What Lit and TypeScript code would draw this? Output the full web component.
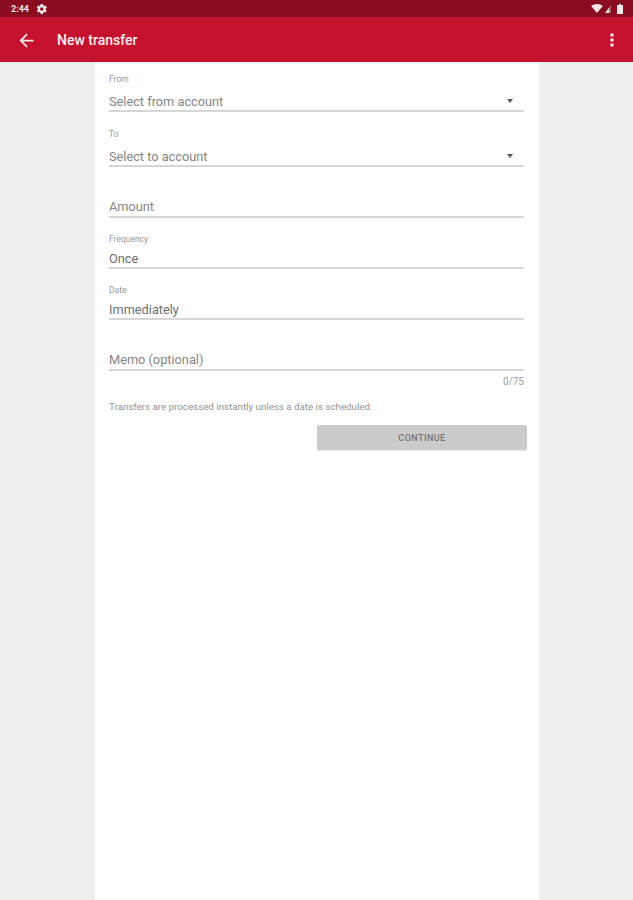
import { LitElement, html, css, nothing } from 'lit';
import { customElement } from 'lit/decorators.js';

interface Field {
  label?: string;
  value: string;
  select?: boolean;
  cls: string;
}

const FIELDS: Field[] = [
  { label: 'From', value: 'Select from account', select: true, cls: 'from' },
  { label: 'To', value: 'Select to account', select: true, cls: 'to' },
  { value: 'Amount', cls: 'amount' },
  { label: 'Frequency', value: 'Once', cls: 'freq' },
  { label: 'Date', value: 'Immediately', cls: 'date' },
  { value: 'Memo (optional)', cls: 'memo' },
];

@customElement('app-root')
export class AppRoot extends LitElement {
  static styles = css`
    :host {
      display: flex;
      flex-direction: column;
      height: 900px;
      background: #eeeeee;
      font-family: Roboto, 'Liberation Sans', sans-serif;
      overflow: hidden;
    }

    .status {
      height: 17px;
      flex: none;
      background: #8a0c21;
      color: #f6e6e8;
      display: flex;
      align-items: center;
      padding: 0 10px 0 11px;
      font-size: 9px;
      font-weight: 700;
    }

    .status svg {
      display: block;
    }

    .status__time {
      margin-right: 7px;
    }

    .status__right {
      margin-left: auto;
      display: flex;
      align-items: center;
      gap: 2px;
    }

    .status__battery {
      margin-left: 4px;
    }

    .toolbar {
      height: 45px;
      flex: none;
      background: #c5102e;
      border-bottom: 1px solid #cc0f24;
      box-sizing: border-box;
      display: flex;
      align-items: center;
      color: #fbeef0;
      padding: 2px 19px 0 16px;
    }

    .toolbar__title {
      margin-left: 20px;
      font-size: 14px;
      font-weight: 500;
    }

    .toolbar__more {
      margin-left: auto;
    }

    .toolbar svg {
      display: block;
    }

    .panel {
      flex: 1;
      width: 444px;
      margin-left: 95px;
      background: #ffffff;
      box-sizing: border-box;
      padding: 11px 15px 0 14px;
    }

    .field {
      position: relative;
      display: flex;
      flex-direction: column;
      justify-content: flex-end;
      border-bottom: 2px solid #d6d6d6;
      box-sizing: border-box;
    }

    .from { height: 39px; }
    .to { height: 39px; margin-top: 16px; }
    .amount { height: 28px; margin-top: 23px; }
    .freq { height: 39px; margin-top: 12px; }
    .date { height: 39px; margin-top: 12px; }
    .memo { height: 28px; margin-top: 23px; }

    .field__label {
      font-size: 8.500px;
      line-height: 10px;
      color: #989898;
      margin-bottom: 7px;
    }

    .from .field__label,
    .to .field__label {
      margin-bottom: 10px;
    }

    .field__value {
      font-size: 12.750px;
      line-height: 15px;
      color: #858585;
      padding-bottom: 1px;
    }

    .amount .field__value,
    .memo .field__value {
      padding-bottom: 2px;
    }

    .freq .field__value,
    .date .field__value {
      color: #6e6e6e;
    }

    .field__arrow {
      position: absolute;
      right: 11px;
      bottom: 7px;
      width: 0;
      height: 0;
      border-left: 3.500px solid transparent;
      border-right: 3.500px solid transparent;
      border-top: 4px solid #555555;
    }

    .count {
      text-align: right;
      font-size: 10px;
      line-height: 12px;
      color: #a0a0a0;
      margin-top: 5px;
    }

    .hint {
      font-size: 9.750px;
      line-height: 12px;
      color: #929292;
      margin-top: 13px;
    }

    .actions {
      display: flex;
      justify-content: flex-end;
      margin: 12px -3px 0 0;
    }

    .continue {
      width: 210px;
      height: 25px;
      border: 0;
      border-radius: 2px;
      background: #cbcbcb;
      box-shadow: 0 1px 1px rgba(0, 0, 0, 0.12);
      color: #747474;
      font: 500 9px Roboto, 'Liberation Sans', sans-serif;
      letter-spacing: 0.450px;
      padding: 0;
    }
  `;

  renderField(f: Field) {
    return html`
      <div class="field ${f.cls}">
        ${f.label ? html`<div class="field__label">${f.label}</div>` : nothing}
        <div class="field__value">${f.value}</div>
        ${f.select ? html`<span class="field__arrow"></span>` : nothing}
      </div>
    `;
  }

  render() {
    return html`
      <div class="status">
        <span class="status__time">2:44</span>
        <svg width="12" height="12" viewBox="0 0 24 24" fill="currentColor">
          <path fill-rule="evenodd" d="M19.400 13c.1-.3.1-.7.1-1s0-.7-.1-1l2.100-1.600c.2-.2.2-.4.1-.6l-2-3.500c-.1-.2-.4-.3-.6-.2l-2.500 1c-.5-.4-1.100-.7-1.700-1L14 2.400c0-.2-.2-.4-.5-.4h-4c-.3 0-.5.2-.5.4l-.4 2.700c-.6.3-1.200.6-1.700 1l-2.500-1c-.2-.1-.5 0-.6.2l-2 3.500c-.1.2-.1.4.1.6L4 11c-.1.3-.1.700-.1 1s0 .7.1 1l-2.100 1.600c-.2.2-.2.4-.1.6l2 3.500c.1.2.4.3.6.2l2.500-1c.5.4 1.100.7 1.700 1l.4 2.700c0 .2.2.4.5.4h4c.3 0 .5-.2.5-.4l.4-2.700c.6-.3 1.200-.6 1.700-1l2.500 1c.2.1.5 0 .6-.2l2-3.500c.1-.2.1-.4-.1-.6L19.400 13zM11.500 15.500a3.500 3.500 0 1 1 0-7 3.500 3.500 0 0 1 0 7z"/>
        </svg>
        <span class="status__right">
          <svg width="12" height="9" viewBox="0 0 13 10" fill="currentColor">
            <path d="M0 2.200C1.800.8 4 0 6.500 0S11.200.8 13 2.200L6.500 10z"/>
          </svg>
          <svg width="6" height="8" viewBox="0 0 6 8" fill="currentColor">
            <path d="M6 0v8H0z" opacity=".4"/>
            <path d="M4 3v5H0z"/>
          </svg>
          <svg class="status__battery" width="6" height="10" viewBox="0 0 6 10" fill="currentColor">
            <path d="M2 0h2v1h2v9H0V1h2z"/>
          </svg>
        </span>
      </div>
      <header class="toolbar">
        <svg width="21" height="21" viewBox="0 0 24 24" fill="currentColor">
          <path d="M20 11H7.800l5.600-5.600L12 4l-8 8 8 8 1.400-1.400L7.800 13H20z"/>
        </svg>
        <span class="toolbar__title">New transfer</span>
        <svg class="toolbar__more" width="4" height="14" viewBox="0 0 4 14" fill="currentColor">
          <rect x="0.500" y="0.500" width="3" height="3"/>
          <rect x="0.500" y="5.500" width="3" height="3"/>
          <rect x="0.500" y="10.500" width="3" height="3"/>
        </svg>
      </header>
      <main class="panel">
        ${FIELDS.map((f) => this.renderField(f))}
        <div class="count">0/75</div>
        <div class="hint">Transfers are processed instantly unless a date is scheduled.</div>
        <div class="actions"><button class="continue">CONTINUE</button></div>
      </main>
    `;
  }
}
